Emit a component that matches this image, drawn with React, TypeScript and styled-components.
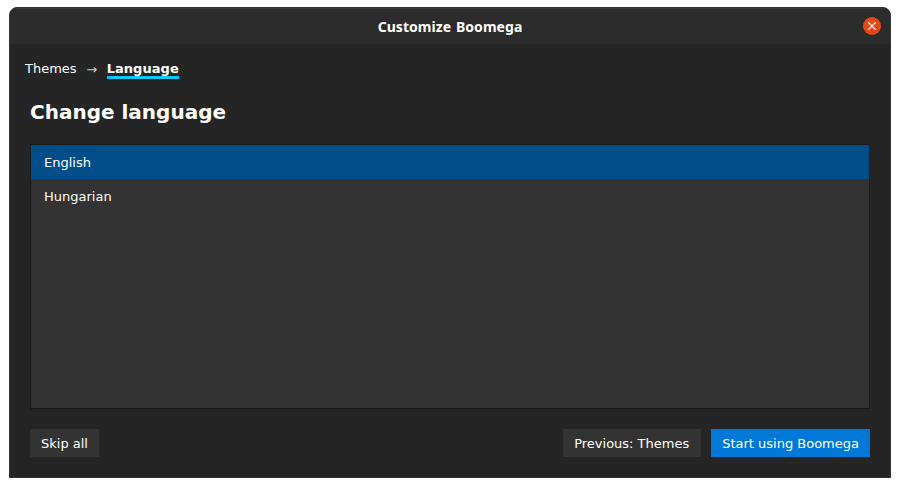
import React from "react";
import styled, { createGlobalStyle } from "styled-components";

const GlobalStyle = createGlobalStyle`
  * { box-sizing: border-box; }
  html, body { margin: 0; background: #fff; overflow: hidden; }
`;

const Page = styled.div`
  height: 487px;
  padding: 7px 9px 9px;
`;

const Window = styled.div`
  height: 471px;
  display: flex;
  flex-direction: column;
  border: 1px solid #333;
  border-radius: 8px 8px 0 0;
  background: #252525;
  color: #fff;
  font: 13px/16px "DejaVu Sans", sans-serif;
  overflow: hidden;
`;

const TitleBar = styled.header`
  height: 36px;
  flex-shrink: 0;
  display: grid;
  grid-template-columns: 1fr auto 1fr;
  align-items: center;
  padding: 0 9px;
  background: #2c2c2c;
  box-shadow: inset 0 1px #383838;
`;

const Title = styled.div`
  grid-column: 2;
  padding-top: 2px;
  font: bold 14px/20px "Noto Sans", sans-serif;
  letter-spacing: 0.06px;
  word-spacing: 1px;
`;

const CloseButton = styled.button`
  justify-self: end;
  width: 18px;
  height: 18px;
  padding: 0;
  border: 0;
  border-radius: 50%;
  background: #e2491a;
  display: flex;
`;

const Content = styled.main`
  flex: 1;
  display: flex;
  flex-direction: column;
  padding: 17px 20px 20px;
`;

const Breadcrumb = styled.nav`
  display: flex;
  height: 18px;
  margin-left: -5px;
`;

const Crumb = styled.span<{ $current?: boolean }>`
  width: ${(p) => (p.$current ? "72px" : "auto")};
  font-weight: ${(p) => (p.$current ? "bold" : "normal")};
  letter-spacing: ${(p) => (p.$current ? "0.05px" : "0")};
  border-bottom: ${(p) => (p.$current ? "3px solid #00c8fa" : "0")};
`;

const Arrow = styled.span`
  width: 30px;
  padding-top: 1px;
  text-align: center;
  color: #ccc;
`;

const Heading = styled.h1`
  margin: 20px 0 19px;
  font: bold 20px/26px "DejaVu Sans", sans-serif;
`;

const List = styled.div`
  height: 265px;
  border: 1px solid #1a1a1a;
  background: #333;
`;

const ListItem = styled.div<{ $selected?: boolean }>`
  height: 34px;
  padding: 1px 13px 0;
  line-height: 34px;
  background: ${(p) => (p.$selected ? "#004f8a" : "transparent")};
`;

const Footer = styled.footer`
  display: flex;
  gap: 10px;
  margin-top: 20px;
`;

const Button = styled.button<{ $primary?: boolean; $first?: boolean }>`
  height: 28px;
  padding: 1px 11px 0;
  border: 0;
  margin-right: ${(p) => (p.$first ? "auto" : "0")};
  background: ${(p) => (p.$primary ? "#0078d7" : "#333")};
  color: #fff;
  font: 13px/27px "DejaVu Sans", sans-serif;
`;

const WideButton = styled(Button)`
  width: 138px;
  padding: 1px 0 0 11px;
  text-align: left;
`;

export default function App() {
  return (
    <Page>
      <GlobalStyle />
      <Window>
        <TitleBar>
          <Title>Customize Boomega</Title>
          <CloseButton aria-label="Close">
            <svg width="18" height="18" viewBox="0 0 18 18">
              <path d="M5.4 5.4l7.2 7.2M12.6 5.4l-7.2 7.2" stroke="#fff" strokeWidth="1.2" />
            </svg>
          </CloseButton>
        </TitleBar>
        <Content>
          <Breadcrumb>
            <Crumb>Themes</Crumb>
            <Arrow>→</Arrow>
            <Crumb $current>Language</Crumb>
          </Breadcrumb>
          <Heading>Change language</Heading>
          <List>
            <ListItem $selected>English</ListItem>
            <ListItem>Hungarian</ListItem>
          </List>
          <Footer>
            <Button $first>Skip all</Button>
            <WideButton>Previous: Themes</WideButton>
            <Button $primary>Start using Boomega</Button>
          </Footer>
        </Content>
      </Window>
    </Page>
  );
}
